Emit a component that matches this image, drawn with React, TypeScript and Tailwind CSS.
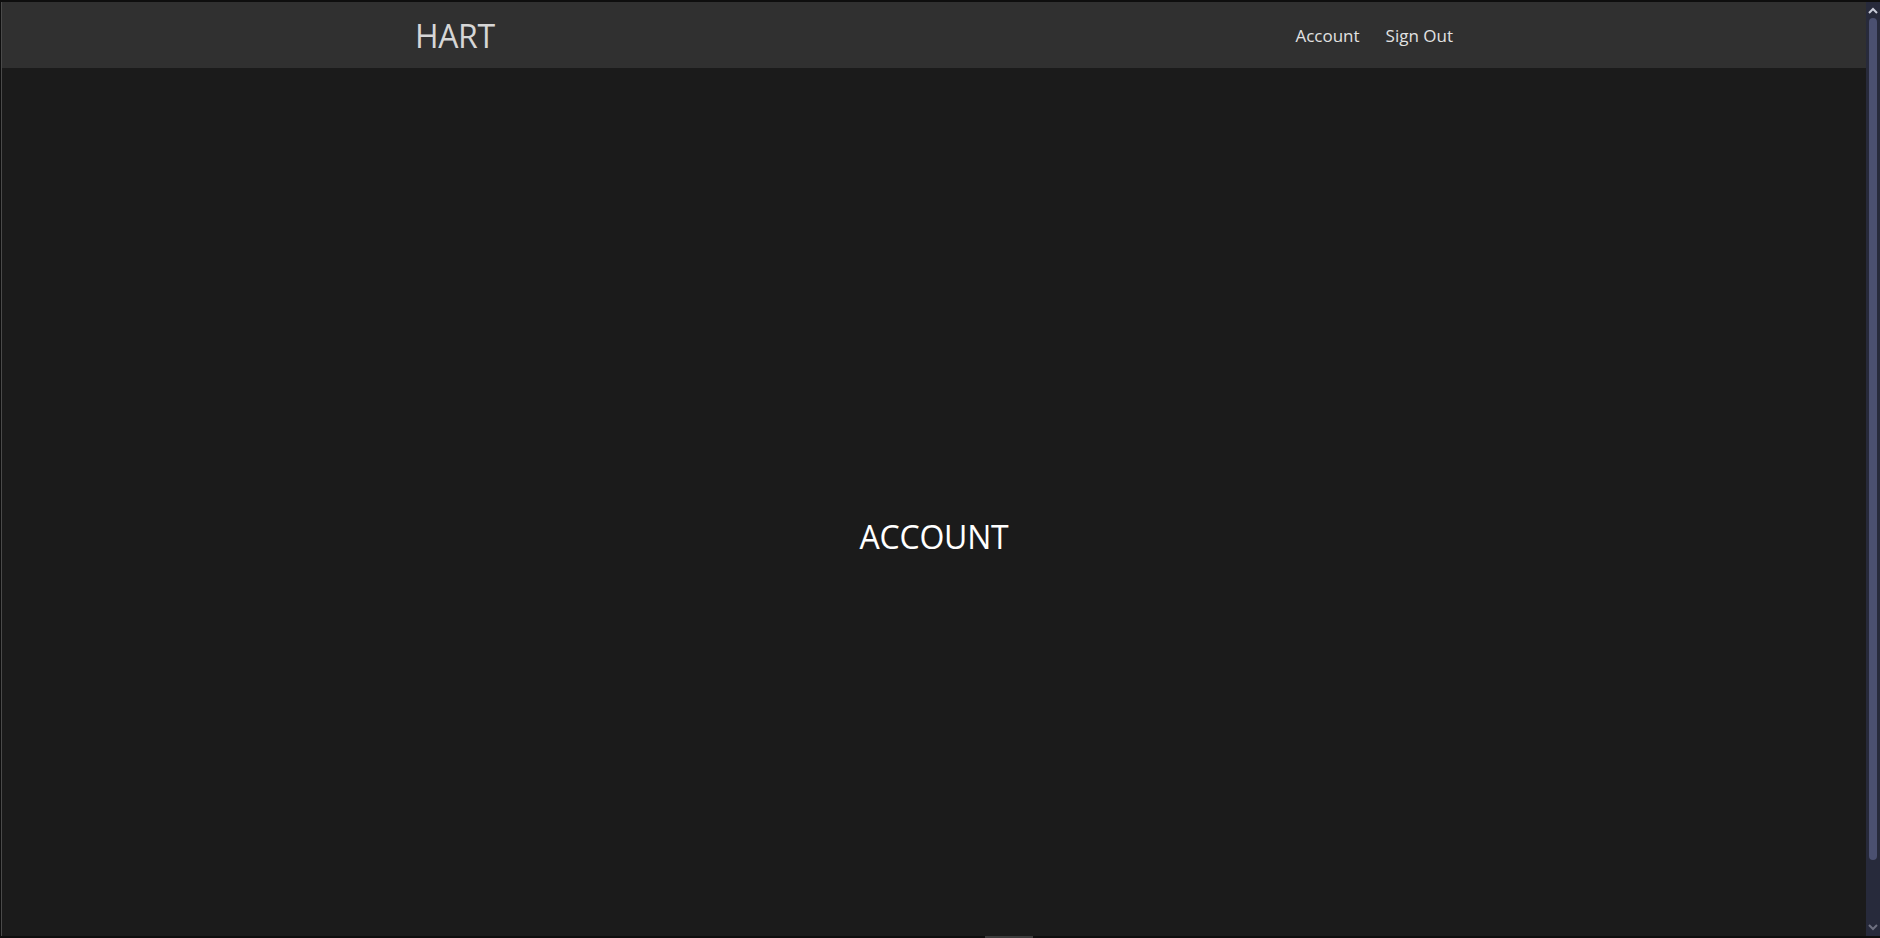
import React from "react";

export default function App() {
  const font = { fontFamily: '"Open Sans", "Noto Sans", "Liberation Sans", sans-serif' };
  return (
    <div className="w-[1880px] h-[938px] bg-[#0e0e0e] flex flex-col overflow-hidden" style={font}>
      <div className="h-[2px] shrink-0 bg-[#0e0e0e]" />
      <div className="flex flex-1 min-h-0">
        <div className="w-[1px] bg-[#0e0e0e] shrink-0" />
        <div className="w-[1px] bg-[#4a4a4a] shrink-0" />
        <div className="flex-1 flex flex-col overflow-hidden bg-[#1b1b1b]">
          <nav className="h-[66px] shrink-0 bg-[#303030] flex items-center">
            <div className="w-[1038px] mx-auto flex items-center justify-between pt-[2px]">
              <span className="text-[32px] leading-none text-[#d6d6d6] tracking-[-0.4px]">HART</span>
              <div className="flex items-center gap-[26px] text-[17px] text-[#e2e2e2]">
                <span>Account</span>
                <span>Sign Out</span>
              </div>
            </div>
          </nav>
          <main className="h-[938px] shrink-0 flex items-center justify-center">
            <h1 className="text-[32px] text-white leading-none tracking-[-0.2px]">ACCOUNT</h1>
          </main>
        </div>
        <div className="w-[14px] shrink-0 bg-[#272a3b] flex flex-col items-center">
          <svg width="10" height="8" viewBox="0 0 10 8" className="mt-[5px]">
            <path d="M1 6 L5 2 L9 6" stroke="#c8cbd8" strokeWidth="2" fill="none" />
          </svg>
          <div className="w-[8px] h-[842px] mt-[3px] rounded-[4px] bg-[#4b5070]" />
          <div className="flex-1" />
          <svg width="10" height="8" viewBox="0 0 10 8" className="mb-[5px]">
            <path d="M1 2 L5 6 L9 2" stroke="#6e7080" strokeWidth="2" fill="none" />
          </svg>
        </div>
      </div>
      <div className="h-[2px] shrink-0 bg-[#0e0e0e] flex">
        <div className="w-[985px]" />
        <div className="w-[48px] bg-[#3c3c3c]" />
      </div>
    </div>
  );
}
